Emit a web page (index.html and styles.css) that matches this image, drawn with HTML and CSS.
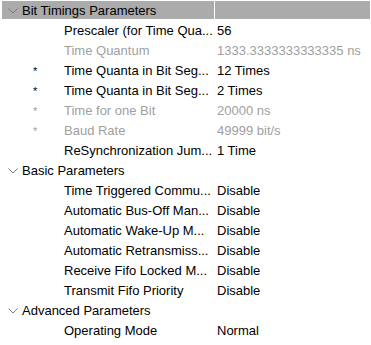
FILE: index.html
```html
<!DOCTYPE html>
<html>
<head>
<meta charset="utf-8">
<link rel="stylesheet" href="styles.css">
</head>
<body>
<div class="tree">
  <div class="row group selected">
    <span class="chev"><svg width="10" height="6" viewBox="0 0 10 6"><path d="M0.5 0.5 L5 5 L9.5 0.5" fill="none" stroke="#7a7a7a" stroke-width="1"/></svg></span>
    <span class="gname">Bit Timings Parameters</span>
    <span class="sep"></span>
  </div>
  <div class="row"><span class="mark"></span><span class="label">Prescaler (for Time Qua...</span><span class="value">56</span></div>
  <div class="row dim"><span class="mark"></span><span class="label">Time Quantum</span><span class="value">1333.3333333333335 ns</span></div>
  <div class="row"><span class="mark">*</span><span class="label">Time Quanta in Bit Seg...</span><span class="value">12 Times</span></div>
  <div class="row"><span class="mark">*</span><span class="label">Time Quanta in Bit Seg...</span><span class="value">2 Times</span></div>
  <div class="row dim"><span class="mark">*</span><span class="label">Time for one Bit</span><span class="value">20000 ns</span></div>
  <div class="row dim"><span class="mark">*</span><span class="label">Baud Rate</span><span class="value">49999 bit/s</span></div>
  <div class="row"><span class="mark"></span><span class="label">ReSynchronization Jum...</span><span class="value">1 Time</span></div>
  <div class="row group">
    <span class="chev"><svg width="10" height="6" viewBox="0 0 10 6"><path d="M0.5 0.5 L5 5 L9.5 0.5" fill="none" stroke="#7a7a7a" stroke-width="1"/></svg></span>
    <span class="gname">Basic Parameters</span>
  </div>
  <div class="row"><span class="mark"></span><span class="label">Time Triggered Commu...</span><span class="value">Disable</span></div>
  <div class="row"><span class="mark"></span><span class="label">Automatic Bus-Off Man...</span><span class="value">Disable</span></div>
  <div class="row"><span class="mark"></span><span class="label">Automatic Wake-Up M...</span><span class="value">Disable</span></div>
  <div class="row"><span class="mark"></span><span class="label">Automatic Retransmiss...</span><span class="value">Disable</span></div>
  <div class="row"><span class="mark"></span><span class="label">Receive Fifo Locked M...</span><span class="value">Disable</span></div>
  <div class="row"><span class="mark"></span><span class="label">Transmit Fifo Priority</span><span class="value">Disable</span></div>
  <div class="row group">
    <span class="chev"><svg width="10" height="6" viewBox="0 0 10 6"><path d="M0.5 0.5 L5 5 L9.5 0.5" fill="none" stroke="#7a7a7a" stroke-width="1"/></svg></span>
    <span class="gname">Advanced Parameters</span>
  </div>
  <div class="row"><span class="mark"></span><span class="label">Operating Mode</span><span class="value">Normal</span></div>
</div>
</body>
</html>
```
FILE: styles.css
```css
html, body {
  margin: 0;
  padding: 0;
  background: #ffffff;
}
body {
  font-family: "Liberation Sans", Arial, sans-serif;
  font-size: 13px;
  color: #000000;
}
.tree {
  display: flex;
  flex-direction: column;
  padding: 0 1px 0 2px;
}
.row {
  display: flex;
  align-items: center;
  height: 20px;
  white-space: nowrap;
  padding-top: 1px;
  box-sizing: border-box;
}
.row.selected {
  background: #ababab;
  height: 18px;
  margin: 1px 0;
  padding-top: 0;
}
.chev {
  width: 20px;
  display: flex;
  justify-content: center;
  padding-left: 1px;
  box-sizing: border-box;
}
.chev svg { display: block; margin-top: 1px; }
.gname {
  width: 192px;
}
.sep {
  align-self: stretch;
  width: 1px;
  background: #ffffff;
}
.mark {
  width: 62px;
  padding-left: 31px;
  box-sizing: border-box;
  font-size: 11px;
}
.label {
  width: 153px;
  overflow: hidden;
}
.value {
  flex: 1;
}
.dim {
  color: #a0a0a0;
}
```
